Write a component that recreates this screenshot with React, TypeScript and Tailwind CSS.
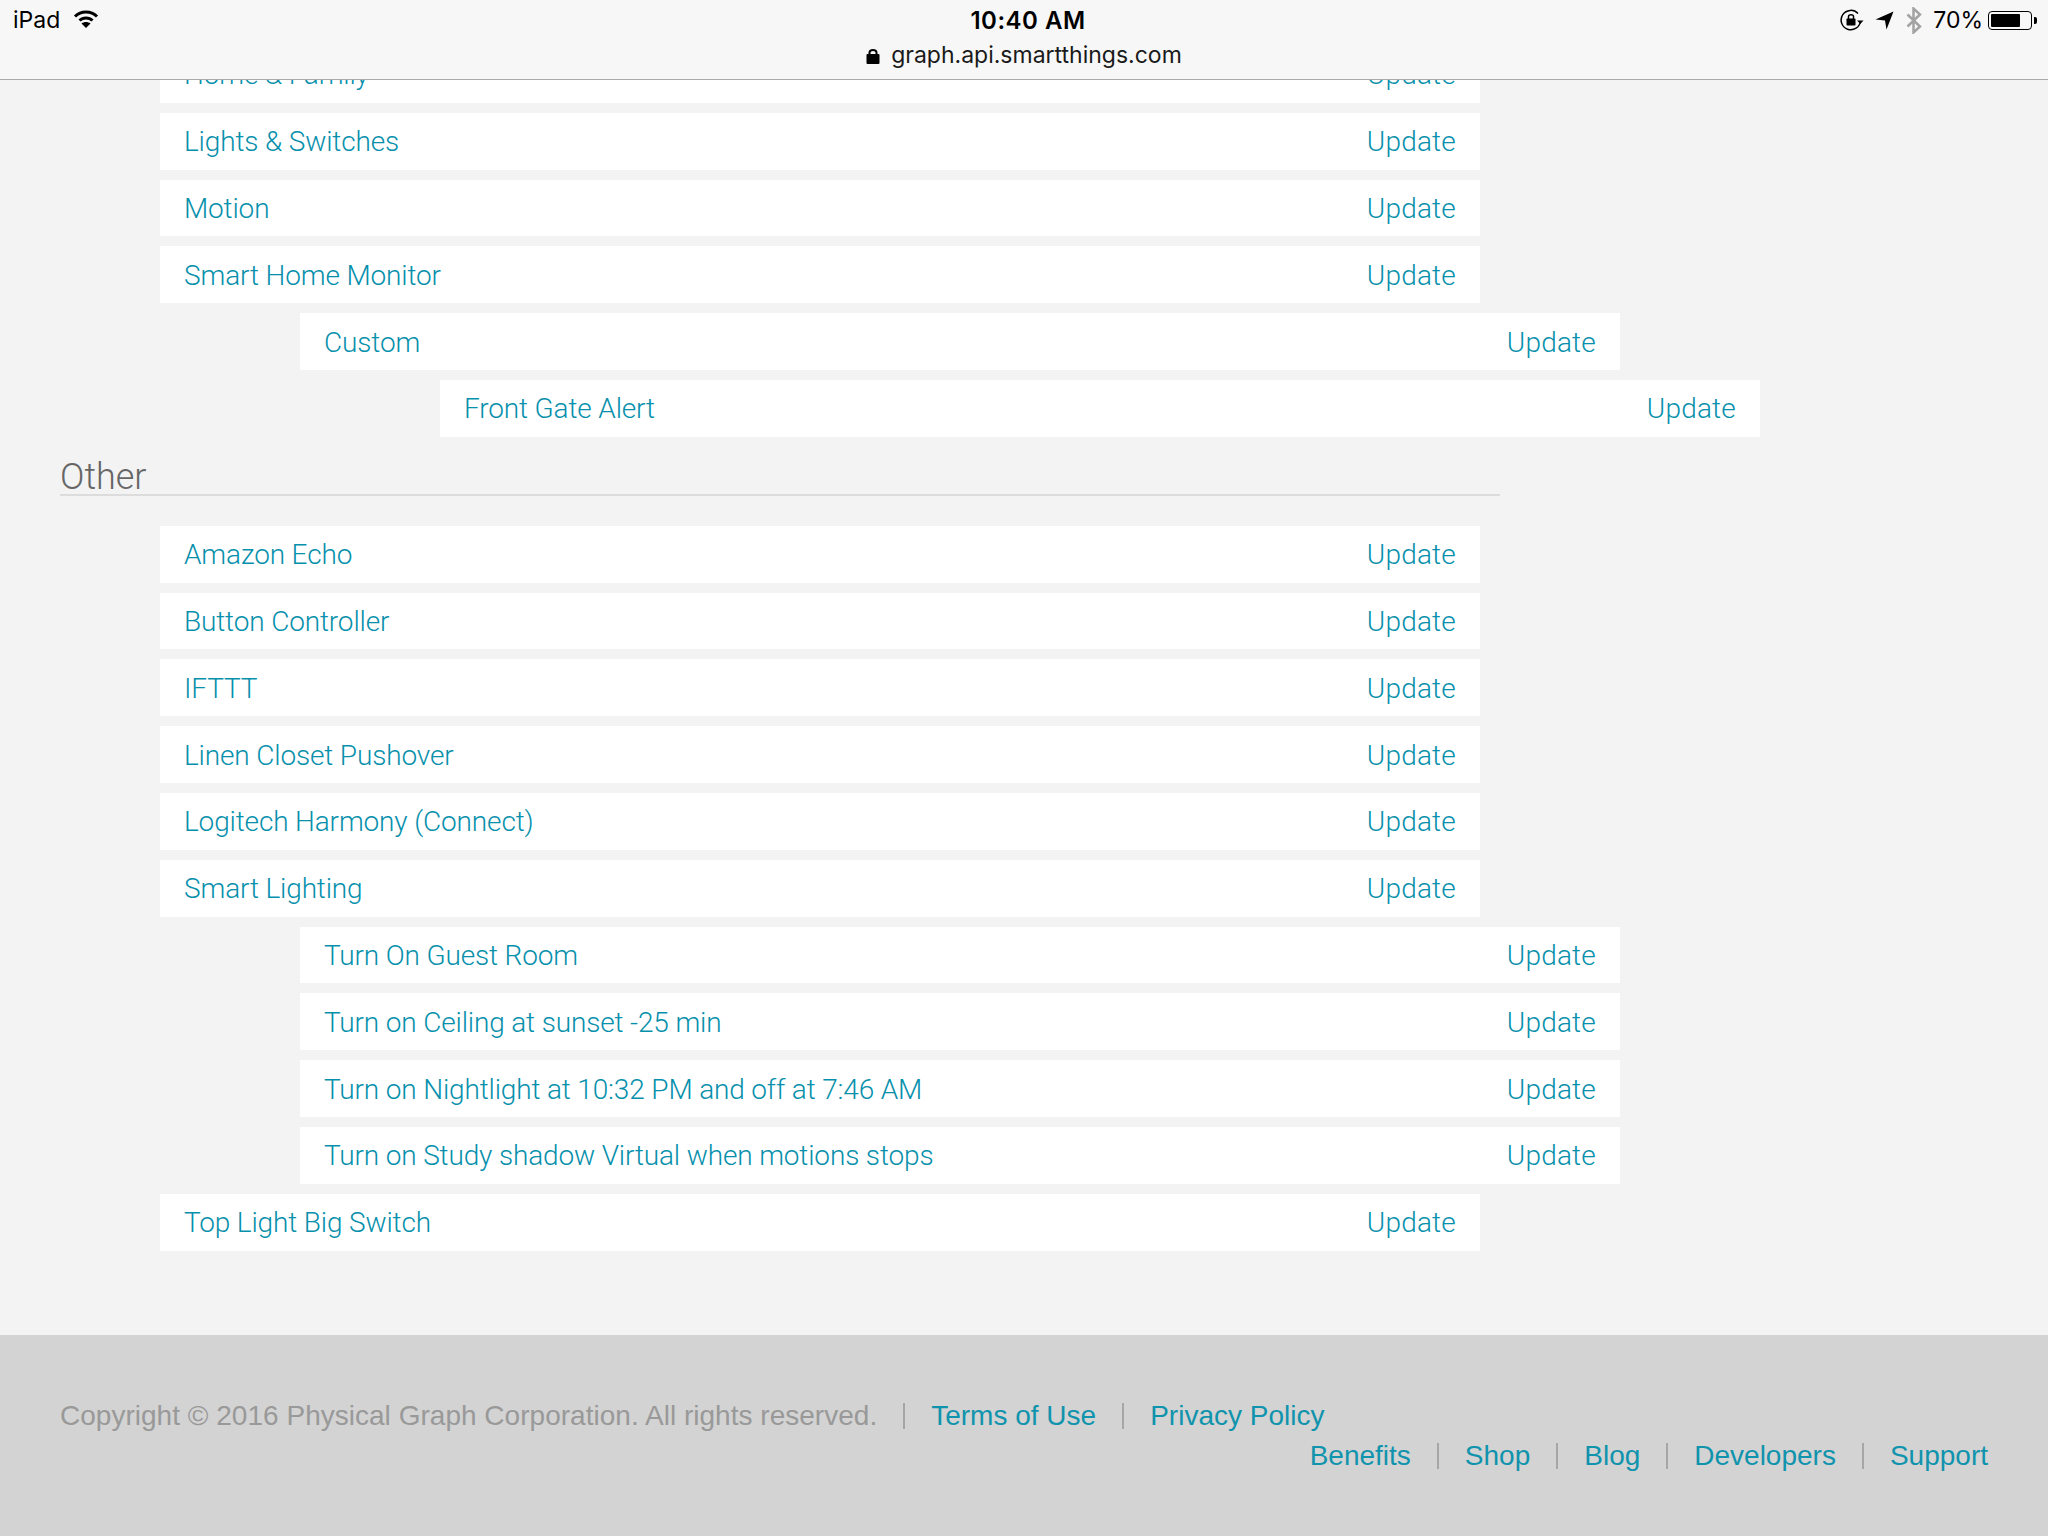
const rowFont = "font-['Roboto',sans-serif] font-light";

type Row = { label: string; level?: number };

const topRows: Row[] = [
  { label: "Home & Family" },
  { label: "Lights & Switches" },
  { label: "Motion" },
  { label: "Smart Home Monitor" },
  { label: "Custom", level: 1 },
  { label: "Front Gate Alert", level: 2 },
];

const otherRows: Row[] = [
  { label: "Amazon Echo" },
  { label: "Button Controller" },
  { label: "IFTTT" },
  { label: "Linen Closet Pushover" },
  { label: "Logitech Harmony (Connect)" },
  { label: "Smart Lighting" },
  { label: "Turn On Guest Room", level: 1 },
  { label: "Turn on Ceiling at sunset -25 min", level: 1 },
  { label: "Turn on Nightlight at 10:32 PM and off at 7:46 AM", level: 1 },
  { label: "Turn on Study shadow Virtual when motions stops", level: 1 },
  { label: "Top Light Big Switch" },
];

function AppRow({ label, level = 0 }: Row) {
  const indent = level === 2 ? "ml-[280px]" : level === 1 ? "ml-[140px]" : "ml-0";
  return (
    <div className={`${indent} w-[1320px] h-[56.8px] mb-[10px] bg-white px-6 pt-[2px] flex items-center justify-between text-[28px] text-[#0790ac] ${rowFont}`}>
      <a className="tracking-[-0.15px]">{label}</a>
      <a className="tracking-[0.2px]">Update</a>
    </div>
  );
}

function Sep() {
  return <span className="w-[2px] h-[26px] bg-[#a6a6a6] mx-[26px]" />;
}

function WifiIcon() {
  return (
    <svg width="26" height="20" viewBox="0 0 26 20" fill="none" stroke="black" strokeWidth="3">
      <path d="M2 7.500C8 1.500 18 1.500 24 7.500" />
      <path d="M6.500 11.500C10 8 16 8 19.500 11.500" />
      <path d="M13 19L8.500 14.500C11 12.500 15 12.500 17.500 14.500Z" fill="black" stroke="none" />
    </svg>
  );
}

function LockIcon() {
  return (
    <svg width="14" height="16" viewBox="0 0 14 16">
      <rect x="0.500" y="6" width="13" height="10" rx="1" fill="black" />
      <path d="M3.500 7V4.500C3.500 1 10.500 1 10.500 4.500V7" fill="none" stroke="black" strokeWidth="2" />
    </svg>
  );
}

function RotationLockIcon() {
  return (
    <svg width="24" height="22" viewBox="0 0 24 22" fill="none">
      <path d="M20.500 12A9.700 9.700 0 1 1 18 4.500" stroke="black" strokeWidth="1.500" />
      <path d="M17 11.500H23.500L20.300 15Z" fill="black" />
      <rect x="6.500" y="9.500" width="9" height="7" rx="0.800" fill="black" />
      <path d="M8.500 10V7.500C8.500 5 13.500 5 13.500 7.500V10" stroke="black" strokeWidth="1.500" />
    </svg>
  );
}

function LocationIcon() {
  return (
    <svg width="19" height="19" viewBox="0 0 19 19">
      <path d="M18.500 0.500L0.500 8.500L10 9.500L11.500 18.500Z" fill="black" />
    </svg>
  );
}

function BluetoothIcon() {
  return (
    <svg width="16" height="27" viewBox="0 0 16 27" fill="none" stroke="#a3a3a3" strokeWidth="2.500">
      <path d="M1.500 7.500L14 19.500L7.500 25.500V1.500L14 7.500L1.500 19.500" />
    </svg>
  );
}

function BatteryIcon() {
  return (
    <div className="flex items-center">
      <div className="w-[44px] h-[19px] border border-black rounded-[4px] p-[2px] flex">
        <div className="w-[29px] bg-black rounded-[1px]" />
      </div>
      <div className="ml-[2px] w-[3px] h-[7px] bg-black rounded-r-[2px]" />
    </div>
  );
}

export default function App() {
  return (
    <div className="w-[2048px] h-[1536px] overflow-hidden flex flex-col bg-[#f3f3f3] font-['Liberation_Sans',sans-serif]">
      {/* ios status bar + address */}
      <header className="relative z-10 h-[80px] shrink-0 bg-[#f7f7f7] border-b border-[#aaaaaa] grid grid-cols-[1fr_auto_1fr] px-[11px] pt-[5px] text-black font-['Inter',sans-serif]">
        <div className="flex items-start gap-[13px] pl-[2px]">
          <span className="text-[23px] leading-[30px]">iPad</span>
          <span className="mt-[4px]"><WifiIcon /></span>
        </div>
        <div className="flex flex-col items-center">
          <span className="ml-2 text-[24px] leading-[32px] font-semibold tracking-[0.5px]">10:40 AM</span>
          <div className="flex items-center gap-[11px] mt-[2px] text-[23px] leading-[33px] text-[#1a1a1a]">
            <LockIcon />
            <span>graph.api.smartthings.com</span>
          </div>
        </div>
        <div className="flex items-start justify-end">
          <span className="mt-[4px]"><RotationLockIcon /></span>
          <span className="mt-[6px] ml-[11px]"><LocationIcon /></span>
          <span className="mt-[2px] ml-[12px]"><BluetoothIcon /></span>
          <span className="ml-[11px] text-[23px] leading-[30px]">70%</span>
          <span className="mt-[6px] ml-[5px]"><BatteryIcon /></span>
        </div>
      </header>

      <main className="flex-1 overflow-hidden pl-[160px] -mt-px">
        <div className="mt-[-33px]">
          {topRows.map((r) => <AppRow key={r.label} {...r} />)}
        </div>
        <h2 className={`-ml-[100px] w-[1440px] h-[44px] mt-[15px] mb-[30px] border-b-2 border-[#dcdcdc] text-[36px] leading-[50px] text-[#666666] ${rowFont}`}>Other</h2>
        <div>
          {otherRows.map((r, i) => <AppRow key={i} {...r} />)}
        </div>
      </main>

      <footer className="h-[201px] shrink-0 bg-[#d3d3d3] px-[60px] pt-[61px] text-[28px] leading-[40px] text-[#1093ad] font-['Liberation_Sans',sans-serif]">
        <div className="flex items-center">
          <span className="text-[#999999] tracking-[0.02px]">Copyright © 2016 Physical Graph Corporation. All rights reserved.</span>
          <Sep />
          <a>Terms of Use</a>
          <Sep />
          <a>Privacy Policy</a>
        </div>
        <div className="flex items-center justify-end">
          <a>Benefits</a>
          <Sep />
          <a>Shop</a>
          <Sep />
          <a>Blog</a>
          <Sep />
          <a>Developers</a>
          <Sep />
          <a>Support</a>
        </div>
      </footer>
    </div>
  );
}
